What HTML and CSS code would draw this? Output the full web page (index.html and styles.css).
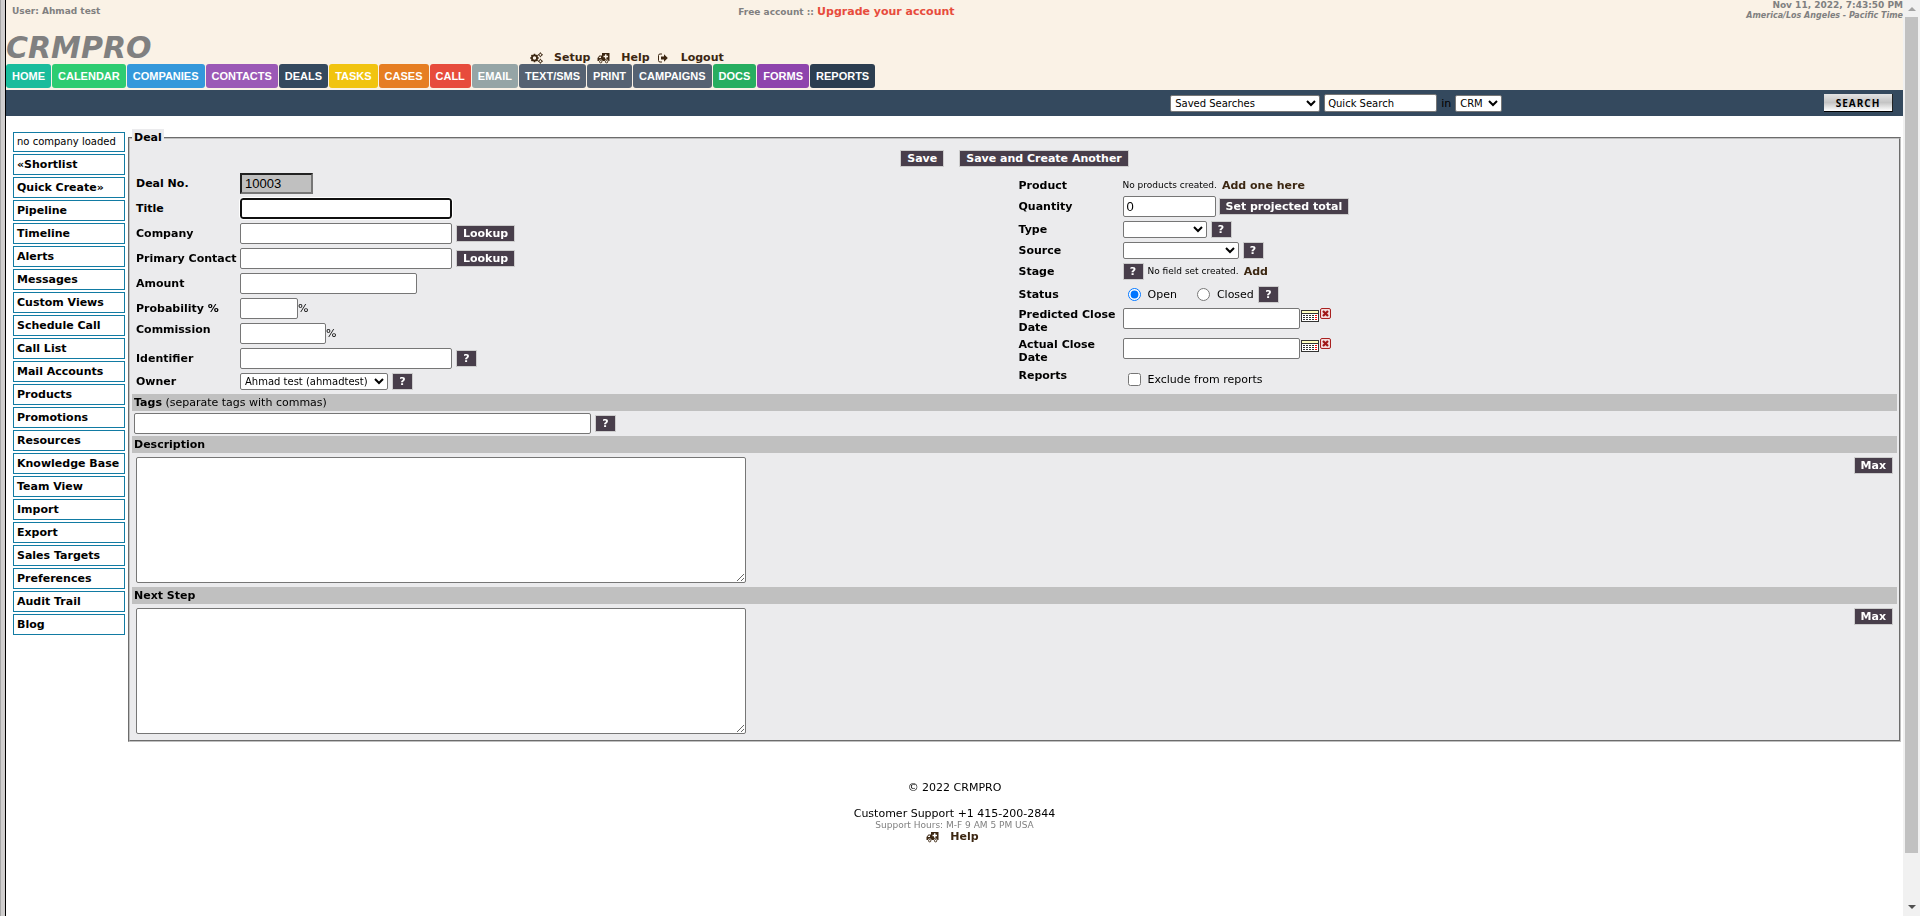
FILE: index.html
```html
<!DOCTYPE html>
<html lang="en">
<head>
<meta charset="utf-8">
<title>CRMPRO - Deal</title>
<link rel="stylesheet" href="styles.css">
</head>
<body>
<svg class="defs" aria-hidden="true">
  <symbol id="i-cogs" viewBox="0 0 13 12">
    <circle cx="4.5" cy="6" r="2.6" fill="none" stroke="currentColor" stroke-width="1.8"/>
    <path d="M4.5 1.7v1.6M4.5 8.7v1.6M.2 6h1.6M7.2 6h1.6M1.5 3l1.1 1.1M6.4 7.9 7.5 9M1.5 9l1.1-1.1M6.4 4.1 7.5 3" stroke="currentColor" stroke-width="1.5"/>
    <circle cx="10.4" cy="2.8" r="1.4" fill="none" stroke="currentColor"/>
    <circle cx="10.4" cy="9.2" r="1.4" fill="none" stroke="currentColor"/>
    <path d="M10.4.4v1M10.4 4.2v1M8 2.8h1M11.8 2.8h1M10.4 6.8v1M10.4 10.6v1M8 9.2h1M11.8 9.2h1" stroke="currentColor"/>
  </symbol>
  <symbol id="i-amb" viewBox="0 0 13 12">
    <path fill="currentColor" fill-rule="evenodd" d="M5 1h7.5v8h-1a2 2 0 0 0-3.800 0H5.600a2 2 0 0 0-3.800 0H.5V6L2.400 3.500H5zM1.600 6H4V4.400H2.800zM8 2.300v1.500H6.500v1.500H8v1.500h1.500V5.300H11V3.800H9.500V2.300z"/>
    <circle cx="3.700" cy="9.700" r="1.200" fill="none" stroke="currentColor" stroke-width=".9"/>
    <circle cx="9.600" cy="9.700" r="1.200" fill="none" stroke="currentColor" stroke-width=".9"/>
  </symbol>
  <symbol id="i-out" viewBox="0 0 13 12">
    <path d="M5 2H3a1.500 1.500 0 0 0-1.500 1.500v5A1.500 1.500 0 0 0 3 10h2" fill="none" stroke="currentColor"/>
    <path d="M4 4.500h3V2.300L10.800 6 7 9.700V7.500H4z" fill="currentColor"/>
  </symbol>
  <symbol id="i-cal" viewBox="0 0 18 12">
    <path fill="#333" d="M0 0h18v12H0z"/><path fill="#ffffc0" d="M1 1h16v2H1z"/><path fill="#fff" d="M1 4h16v7H1z"/>
    <path d="M2 5.500h12M2 7.500h12M2 9.500h12" stroke="#333" stroke-dasharray="2 1"/>
    <path d="M14 5.500h2M14 7.500h2M14 9.500h2" stroke="#f00"/>
  </symbol>
  <symbol id="i-del" viewBox="0 0 11 11">
    <rect x=".5" y=".5" width="10" height="10" rx="1.500" fill="#f3dcdc" stroke="#a82020"/>
    <path d="m3 3 5 5M8 3 3 8" stroke="#a01818" stroke-width="2.200"/>
  </symbol>
</svg>
<div class="app">
  <div class="frame-edge"></div>
  <div class="page">
    <header class="header">
      <div class="top">
        <span class="user">User: Ahmad test</span>
        <span>Free account :: <a class="upgrade" href="#">Upgrade your account</a></span>
        <span class="clock">Nov 11, 2022, 7:43:50 PM<em>America/Los Angeles - Pacific Time</em></span>
      </div>
      <div class="brand-row">
        <div class="brand">CRMPRO</div>
        <div class="util">
          <a href="#"><svg><use href="#i-cogs"/></svg>Setup</a>
          <a href="#"><svg><use href="#i-amb"/></svg>Help</a>
          <a href="#"><svg><use href="#i-out"/></svg>Logout</a>
        </div>
      </div>
      <nav class="tabs">
        <a class="c-home" href="#">HOME</a><a class="c-calendar" href="#">CALENDAR</a><a class="c-companies" href="#">COMPANIES</a><a class="c-contacts" href="#">CONTACTS</a><a class="c-deals" href="#">DEALS</a><a class="c-tasks" href="#">TASKS</a><a class="c-cases" href="#">CASES</a><a class="c-call" href="#">CALL</a><a class="c-email" href="#">EMAIL</a><a class="c-slate" href="#">TEXT/SMS</a><a class="c-slate" href="#">PRINT</a><a class="c-slate" href="#">CAMPAIGNS</a><a class="c-docs" href="#">DOCS</a><a class="c-forms" href="#">FORMS</a><a class="c-reports" href="#">REPORTS</a>
      </nav>
    </header>
    <form class="searchbar">
      <div class="search-fields">
        <select class="saved" aria-label="Saved searches"><option>Saved Searches</option></select>
        <input class="quick" type="text" value="Quick Search" aria-label="Quick search">
        <label for="scope">in</label>
        <select id="scope" class="scope"><option>CRM</option></select>
      </div>
      <button class="search-btn" type="button">SEARCH</button>
    </form>
    <div class="body">
      <nav class="side">
        <span>no company loaded</span>
        <a href="#">«Shortlist</a><a href="#">Quick Create»</a><a href="#">Pipeline</a><a href="#">Timeline</a><a href="#">Alerts</a><a href="#">Messages</a><a href="#">Custom Views</a><a href="#">Schedule Call</a><a href="#">Call List</a><a href="#">Mail Accounts</a><a href="#">Products</a><a href="#">Promotions</a><a href="#">Resources</a><a href="#">Knowledge Base</a><a href="#">Team View</a><a href="#">Import</a><a href="#">Export</a><a href="#">Sales Targets</a><a href="#">Preferences</a><a href="#">Audit Trail</a><a href="#">Blog</a>
      </nav>
      <form>
      <fieldset class="deal">
        <legend>Deal</legend>
        <div class="actions"><button class="btn" type="button">Save</button><button class="btn" type="button">Save and Create Another</button></div>
        <div class="columns">
          <div class="col col-left">
            <div class="row"><label for="no">Deal No.</label><div><input id="no" class="readonly w-no" type="text" value="10003" readonly></div></div>
            <div class="row"><label for="title">Title</label><div><input id="title" class="w-l active" type="text" autofocus></div></div>
            <div class="row"><label for="company">Company</label><div><input id="company" class="w-l" type="text"><button class="btn gap" type="button">Lookup</button></div></div>
            <div class="row"><label for="contact">Primary Contact</label><div><input id="contact" class="w-l" type="text"><button class="btn gap" type="button">Lookup</button></div></div>
            <div class="row"><label for="amount">Amount</label><div><input id="amount" class="w-m" type="text"></div></div>
            <div class="row"><label for="prob">Probability %</label><div><input id="prob" class="w-xs" type="text">%</div></div>
            <div class="row high"><label for="comm">Commission</label><div><input id="comm" class="w-s" type="text">%</div></div>
            <div class="row"><label for="ident">Identifier</label><div><input id="ident" class="w-l" type="text"><button class="btn q gap" type="button">?</button></div></div>
            <div class="row short"><label for="owner">Owner</label><div><select id="owner" class="w-owner"><option>Ahmad test (ahmadtest)</option></select><button class="btn q gap" type="button">?</button></div></div>
          </div>
          <div class="col col-right">
            <div class="row product"><span class="label">Product</span><div><small>No products created.</small><a class="add" href="#">Add one here</a></div></div>
            <div class="row"><label for="qty">Quantity</label><div><input id="qty" class="w-qty" type="text" value="0"><button class="btn gap-s" type="button">Set projected total</button></div></div>
            <div class="row short"><label for="type">Type</label><div><select id="type" class="w-type"><option></option></select><button class="btn q gap" type="button">?</button></div></div>
            <div class="row short"><label for="source">Source</label><div><select id="source" class="w-source"><option></option></select><button class="btn q gap" type="button">?</button></div></div>
            <div class="row short"><span class="label">Stage</span><div><button class="btn q" type="button">?</button><small class="gap">No field set created.</small><a class="add" href="#">Add</a></div></div>
            <div class="row"><span class="label">Status</span><div><label class="opt first"><input type="radio" name="status" checked>Open</label><label class="opt"><input type="radio" name="status">Closed</label><button class="btn q gap" type="button">?</button></div></div>
            <div class="row date"><label for="pclose">Predicted Close Date</label><div><input id="pclose" class="w-m" type="text"><svg class="cal"><use href="#i-cal"/></svg><svg class="del"><use href="#i-del"/></svg></div></div>
            <div class="row date"><label for="aclose">Actual Close Date</label><div><input id="aclose" class="w-m" type="text"><svg class="cal"><use href="#i-cal"/></svg><svg class="del"><use href="#i-del"/></svg></div></div>
            <div class="row high"><span class="label">Reports</span><div><label class="opt check"><input type="checkbox">Exclude from reports</label></div></div>
          </div>
        </div>
        <div class="band"><label for="tags"><b>Tags</b> (separate tags with commas)</label></div>
        <div class="tags"><input id="tags" type="text"><button class="btn q" type="button">?</button></div>
        <div class="band"><label for="desc"><b>Description</b></label></div>
        <div class="area"><textarea id="desc"></textarea><button class="btn" type="button">Max</button></div>
        <div class="band"><label for="next"><b>Next Step</b></label></div>
        <div class="area"><textarea id="next"></textarea><button class="btn" type="button">Max</button></div>
      </fieldset>
      </form>
    </div>
    <footer class="footer">
      <p class="copy">© 2022 CRMPRO</p>
      <p>Customer Support +1 415-200-2844</p>
      <p class="hours">Support Hours: M-F 9 AM 5 PM USA</p>
      <div class="util"><a href="#"><svg><use href="#i-amb"/></svg>Help</a></div>
    </footer>
  </div>
  <div class="scrollbar"><i class="up"></i><div class="thumb"></div><i class="down"></i></div>
</div>
</body>
</html>
```

FILE: styles.css
```css
* { box-sizing: border-box; }
body { margin: 0; background: #fff; color: #000; font: 11px/13px Verdana, "DejaVu Sans", sans-serif; }
p { margin: 0; }
a { color: #3c2712; font-weight: bold; text-decoration: none; }
.defs { position: absolute; width: 0; height: 0; }
.app { display: flex; min-height: 100vh; }
.frame-edge { width: 6px; flex: none; background: #d0cece; border-left: 1px solid #a6a6a6; border-right: 1px solid #000; }
.page { flex: 1; min-width: 0; }

.header { background: #faf2e6; padding-bottom: 2px; }
.top { display: grid; grid-template-columns: 38.6% auto 1fr; height: 32px; color: #808080; font-size: 9px; font-weight: bold; padding-top: 5px; }
.user { padding-left: 6px; }
.upgrade { color: #e74c3c; font-size: 11px; }
.clock { text-align: right; margin-top: -5px; line-height: 11px; }
.clock em { display: block; font-size: 8px; line-height: 10px; }
.brand-row { display: flex; align-items: flex-end; height: 32px; }
.brand { width: 524px; color: #808080; font-size: 30px; line-height: 32px; font-weight: bold; font-style: italic; }
.util { display: flex; gap: 7px; }
.util a { display: flex; align-items: center; gap: 11px; line-height: 12px; }
.util svg { width: 13px; height: 12px; }
.tabs { display: flex; gap: 1px; }
.tabs a { padding: 0 6px; border-radius: 3px; color: #fff; font: bold 11px/24px "Liberation Sans", Arial, sans-serif; }
.c-home { background: #1abc9c; }
.c-calendar { background: #2ecc71; }
.c-companies { background: #3498db; }
.c-contacts { background: #9b59b6; }
.c-deals { background: #34495e; }
.c-tasks { background: #f1c40f; }
.c-cases { background: #e67e22; }
.c-call { background: #e74c3c; }
.c-email { background: #95a5a6; }
.c-slate { background: #556272; }
.c-docs { background: #27ae60; }
.c-forms { background: #8e44ad; }
.c-reports { background: #2c3e50; }

.searchbar { display: flex; justify-content: space-between; align-items: center; height: 26px; padding-right: 10px; padding-left: 61%; background: #34495e; }
.search-fields { display: flex; align-items: center; gap: 4px; padding-left: 7px; }
input, select, textarea, button { margin: 0; font: inherit; }
input[type="text"], select, textarea { border: 1px solid #767676; border-radius: 2px; background: #fff; color: #000; }
input[type="text"] { height: 21px; padding: 1px 3px; font: 13px "Liberation Sans", Arial, sans-serif; }
select { height: 17px; padding: 0; }
.search-fields .saved, .search-fields .scope, .search-fields .quick { font: 10px Verdana, "DejaVu Sans", sans-serif; }
.saved { width: 150px; }
.search-fields .quick { width: 113px; height: 18px; }
.scope { width: 47px; }
.search-btn { width: 69px; height: 18px; padding: 0; border: 0; border-right: 1px solid #222; border-bottom: 1px solid #000; background: linear-gradient(#e4e4e4, #c4c4c4 50%, #fff); color: #000; font: bold 10px "Open Sans", sans-serif; letter-spacing: 1px; }

.body { display: grid; grid-template-columns: 112px 1fr; gap: 3px; padding: 13px 2px 0 7px; }
.side { display: flex; flex-direction: column; gap: 2px; padding-top: 3px; }
.side a, .side span { padding: 3px; border: 1px solid #127ba3; line-height: 13px; color: #000; white-space: nowrap; }
.side span { font-size: 10px; line-height: 12px; }

.deal { margin: 0; min-width: 0; padding: 0 2px 2px; border: 2px groove #c0c0c0; background: #ebebed; }
.deal legend { padding: 2px; background: #ebebed; font-weight: bold; }
.actions { display: flex; justify-content: center; gap: 15px; padding: 4px 0; }
.btn { height: 17px; padding: 0 6px; border: 1px solid #ccc; background: #483e4b; color: #fff; font-weight: bold; line-height: 15px; white-space: nowrap; }
.q { width: 21px; }
.gap { margin-left: 4px; }
.gap-s { margin-left: 3px; }
.columns { display: grid; grid-template-columns: 1fr 1fr; padding-bottom: 2px; }
.col { padding-left: 4px; }
.col-right { padding-top: 5px; }
.row { display: grid; grid-template-columns: 104px 1fr; align-items: center; min-height: 25px; }
.col .short { min-height: 21px; }
.col .product { min-height: 18px; }
.row > div { display: flex; align-items: center; }
.row > label, .label { font-weight: bold; white-space: nowrap; }
.col .high > label, .high > .label { align-self: start; padding-top: 2px; }
.col .date { align-items: start; min-height: 30px; padding-top: 1px; }
.date > label { white-space: normal; }
.date > div { align-items: flex-start; gap: 1px; }
.readonly[type="text"] { border: 2px inset #767676; border-radius: 0; background: #c0c0c0; }
.active[type="text"] { border: 2px solid #101010; border-radius: 3px; outline: 1px solid #fff; }
.w-no { width: 73px; }
.w-l { width: 212px; }
.w-m { width: 177px; }
.w-s { width: 86px; }
.w-xs { width: 58px; }
.w-qty { width: 93px; }
.w-owner { width: 148px; font-size: 10px; }
.w-type { width: 84px; }
.w-source { width: 116px; }
small { font-size: 9px; }
.add { margin-left: 5px; }
.opt { display: flex; align-items: center; gap: 7px; padding-left: 20px; }
.opt.first, .opt.check { padding-left: 5px; }
.cal { width: 18px; height: 12px; margin-top: 2px; }
.del { width: 11px; height: 11px; }
.band { padding: 2px; background: #c0c0c0; }
.tags { display: flex; align-items: center; gap: 4px; padding: 2px; }
.tags input { width: 457px; }
.area { display: flex; justify-content: space-between; align-items: flex-start; padding: 4px; }
.area textarea { display: block; width: 610px; height: 126px; }

.footer { display: flex; flex-direction: column; align-items: center; padding-top: 39px; }
.copy { margin-bottom: 13px; }
.hours { color: #808080; font-size: 9px; line-height: 11px; }
.footer .util { padding-right: 4px; }

.scrollbar { display: flex; flex-direction: column; justify-content: space-between; align-items: center; width: 17px; flex: none; padding: 7px 0; background: #f1f1f1; }
.thumb { width: 13px; flex: 1; margin: 6px 0 52px; background: #c1c1c1; }
.up, .down { border: 4px solid transparent; }
.up { border-top: 0; border-bottom-color: #a3a3a3; }
.down { border-bottom: 0; border-top-color: #505050; }
```
